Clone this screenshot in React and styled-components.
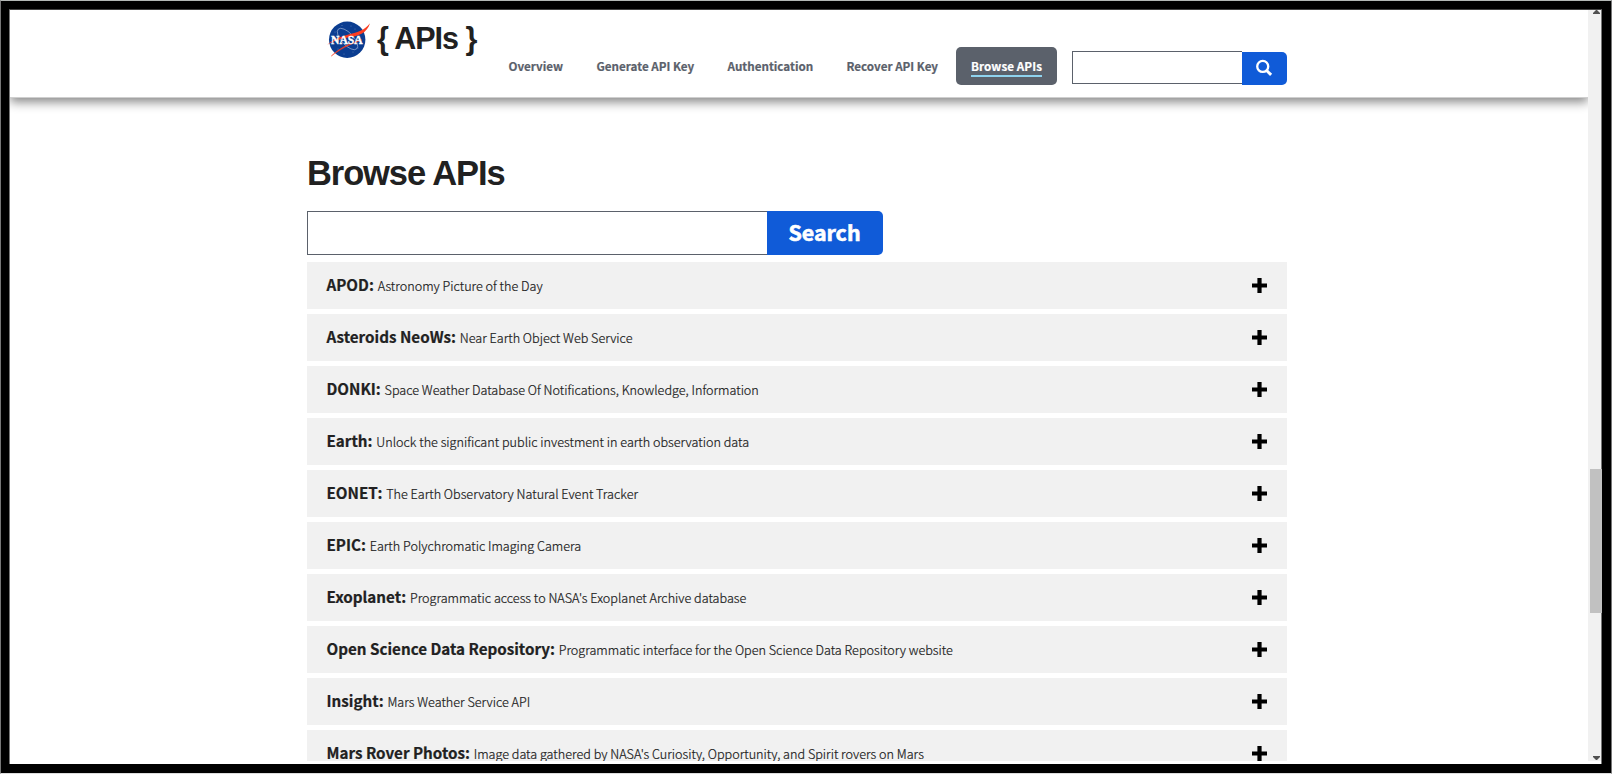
import React from "react";
import styled, { createGlobalStyle } from "styled-components";

const GlobalStyle = createGlobalStyle`
  *, *::before, *::after { box-sizing: border-box; }
  html, body { margin: 0; padding: 0; height: 100%; overflow: hidden; }
  body {
    background: #fff;
    color: #212121;
    font-family: "Noto Sans CJK SC", "Open Sans", sans-serif;
  }
`;

const Frame = styled.div`
  width: 1612px;
  height: 774px;
  border: 1px solid #777;
  border-top-color: #b4b8b6;
  border-bottom-color: #ddd;
`;

const Bezel = styled.div`
  height: 100%;
  border: 8px solid #000;
  border-right-width: 9px;
  border-bottom-width: 9px;
`;

const Viewport = styled.div`
  display: flex;
  height: 100%;
  padding-bottom: 3px;
  border: 1px solid #777;
  border-top-color: #444;
  border-bottom: 0;
  background: #fff;
`;

const Page = styled.div`
  flex: 1;
  min-width: 0;
  overflow: hidden;
`;

const Header = styled.header`
  position: relative;
  height: 88px;
  padding-left: 317px;
  display: flex;
  align-items: flex-start;
  background: #fff;
  border-bottom: 1px solid #cfcfcf;
  box-shadow: 0 4px 10px rgba(0, 0, 0, 0.48);
`;

const Brand = styled.a`
  display: flex;
  align-items: flex-start;
  width: 164px;
  padding-top: 10px;
`;

const BrandName = styled.span`
  margin: 1px 0 0 6px;
  font: bold 30.5px/34px "Liberation Sans", Arial, sans-serif;
  letter-spacing: -1px;
  white-space: nowrap;
`;

const Nav = styled.nav`
  display: flex;
  padding-top: 37px;
`;

const NavLink = styled.a`
  width: ${(p) => p.$width}px;
  height: 38px;
  padding: 9px 0 0 ${(p) => (p.$active ? 15 : 17.5)}px;
  border-radius: 5px;
  background: ${(p) => (p.$active ? "#5b616b" : "transparent")};
  color: ${(p) => (p.$active ? "#fff" : "#5b616b")};
  font-size: 11.65px;
  font-weight: 700;
  line-height: 20px;
  white-space: nowrap;
  -webkit-text-stroke: 0.2px currentColor;
`;

const NavLabel = styled.span`
  display: inline-block;
  height: 21px;
  border-bottom: ${(p) => (p.$active ? "2px solid #8fd3ee" : "0")};
  letter-spacing: ${(p) => (p.$active ? "0.08px" : "0")};
`;

const HeaderSearch = styled.form`
  display: flex;
  margin: 41px 0 0 15px;
`;

const HeaderInput = styled.input`
  width: 170px;
  height: 33px;
  border: 1px solid #5b616b;
  border-right: 0;
  border-radius: 0;
  outline: 0;
`;

const IconButton = styled.button`
  display: flex;
  align-items: center;
  justify-content: center;
  width: 45px;
  height: 33px;
  margin-top: 1px;
  padding: 0 1px 1px 0;
  border: 0;
  border-radius: 0 5px 5px 0;
  background: #105bd8;
`;

const Main = styled.main`
  width: 980px;
  margin: 0 0 0 297px;
`;

const Title = styled.h1`
  margin: 0;
  padding-top: 53px;
  font: bold 34.5px/44px "Liberation Sans", Arial, sans-serif;
  letter-spacing: -1.1px;
`;

const SearchForm = styled.form`
  display: flex;
  margin: 16px 0 7px;
`;

const SearchInput = styled.input`
  width: 460px;
  height: 44px;
  border: 1px solid #5b616b;
  border-right: 0;
  border-radius: 0;
  outline: 0;
`;

const SearchButton = styled.button`
  width: 116px;
  height: 44px;
  padding: 0 1px 3px 0;
  border: 0;
  border-radius: 0 5px 5px 0;
  background: #105bd8;
  color: #fff;
  font: 700 21.4px/40px "Noto Sans CJK SC", sans-serif;
  -webkit-text-stroke: 0.6px #fff;
`;

const List = styled.ul`
  display: flex;
  flex-direction: column;
  gap: 5px;
  margin: 0;
  padding: 0;
  list-style: none;
`;

const Row = styled.li`
  display: flex;
  align-items: center;
  justify-content: space-between;
  height: 47px;
  padding: 0 20px 0 19.5px;
  background: #f1f1f1;
`;

const RowText = styled.div`
  padding-bottom: 2px;
  line-height: 24px;
  font-size: 12.63px;
  font-weight: 300;
  white-space: nowrap;
  -webkit-text-stroke: 0.22px currentColor;
`;

const RowName = styled.strong`
  margin-right: 3.8px;
  font-size: 15.2px;
  font-weight: 700;
`;

const Scrollbar = styled.div`
  display: flex;
  flex-direction: column;
  align-items: flex-end;
  justify-content: space-between;
  width: 13px;
  background: #f1f1f1;
`;

const Arrow = styled.svg`
  display: block;
  margin-right: 1px;
`;

const Thumb = styled.div`
  width: 11px;
  height: 144px;
  margin-top: 312px;
`;

const ThumbFill = styled.div`
  width: 12px;
  height: 100%;
  background: #c1c1c1;
`;

const NasaLogo = () => (
  <svg width="44" height="40" viewBox="0 0 44 40" aria-label="NASA">
    <circle cx="20.2" cy="19.7" r="18.2" fill="#0b3d91" />
    <g fill="#fff" opacity="0.65">
      <circle cx="15" cy="5.5" r=".4" /><circle cx="24" cy="6" r=".4" />
      <circle cx="28" cy="9" r=".4" /><circle cx="8" cy="12" r=".4" />
      <circle cx="11" cy="29" r=".4" /><circle cx="26" cy="32" r=".4" />
      <circle cx="17" cy="34" r=".4" /><circle cx="31" cy="28" r=".4" />
    </g>
    <ellipse cx="20.5" cy="19" rx="6" ry="13.5" transform="rotate(-43 20.5 19)" fill="none" stroke="#c8d5ec" strokeWidth=".7" opacity=".75" />
    <path d="M43 3.2C37 10.5 31.5 12 19 15.2C11 17.5 5 20.5 .3 24.7C8 20.5 14 18.8 21 17.6C31 16 40 13.5 43 3.2Z" fill="#fc3d21" />
    <path d="M4.3 36C12 29 19 24.5 35 19.8C21 25 13 29.5 4.3 36Z" fill="#fc3d21" stroke="#fc3d21" strokeWidth=".5" />
    <text x="4.1" y="24" fill="#fff" stroke="#fff" strokeWidth=".35" fontFamily="Liberation Serif, serif" fontWeight="700" fontSize="11.5" textLength="31.5" lengthAdjust="spacingAndGlyphs">NASA</text>
  </svg>
);

const SearchIcon = () => (
  <svg width="18" height="18" viewBox="0 0 17 17" fill="none" stroke="#fff">
    <circle cx="7.3" cy="7" r="5.2" strokeWidth="2.2" />
    <path d="M11 10.8L15.2 15" strokeWidth="2.8" />
  </svg>
);

const PlusIcon = () => (
  <svg width="15" height="15" viewBox="0 0 15 15">
    <path d="M5.4 0h4.2v5.4H15v4H9.6V15H5.4V9.4H0v-4h5.4z" fill="#000" />
  </svg>
);

const NAV = [
  ["Overview", 88],
  ["Generate API Key", 131],
  ["Authentication", 119],
  ["Recover API Key", 127],
  ["Browse APIs", 101, true],
];

const APIS = [
  ["APOD", "Astronomy Picture of the Day"],
  ["Asteroids NeoWs", "Near Earth Object Web Service"],
  ["DONKI", "Space Weather Database Of Notifications, Knowledge, Information"],
  ["Earth", "Unlock the significant public investment in earth observation data"],
  ["EONET", "The Earth Observatory Natural Event Tracker"],
  ["EPIC", "Earth Polychromatic Imaging Camera"],
  ["Exoplanet", "Programmatic access to NASA's Exoplanet Archive database"],
  ["Open Science Data Repository", "Programmatic interface for the Open Science Data Repository website"],
  ["Insight", "Mars Weather Service API"],
  ["Mars Rover Photos", "Image data gathered by NASA's Curiosity, Opportunity, and Spirit rovers on Mars"],
];

export default function App() {
  return (
    <Frame>
      <GlobalStyle />
      <Bezel>
        <Viewport>
          <Page>
            <Header>
              <Brand>
                <NasaLogo />
                <BrandName>{"{ APIs }"}</BrandName>
              </Brand>
              <Nav>
                {NAV.map(([label, width, active]) => (
                  <NavLink key={label} $width={width} $active={active}>
                    <NavLabel $active={active}>{label}</NavLabel>
                  </NavLink>
                ))}
              </Nav>
              <HeaderSearch>
                <HeaderInput aria-label="Search site" />
                <IconButton type="button" aria-label="Search site"><SearchIcon /></IconButton>
              </HeaderSearch>
            </Header>
            <Main>
              <Title>Browse APIs</Title>
              <SearchForm>
                <SearchInput aria-label="Search APIs" />
                <SearchButton type="button">Search</SearchButton>
              </SearchForm>
              <List>
                {APIS.map(([name, description]) => (
                  <Row key={name}>
                    <RowText><RowName>{name}:</RowName>{description}</RowText>
                    <PlusIcon />
                  </Row>
                ))}
              </List>
            </Main>
          </Page>
          <Scrollbar>
            <Arrow width="7" height="4" viewBox="0 0 7 4"><path d="M0 4V3L3 0h1l3 3v1z" fill="#505050" /></Arrow>
            <Thumb><ThumbFill /></Thumb>
            <Arrow width="7" height="5" viewBox="0 0 7 5"><path d="M0 0h7v1L4 4H3L0 1z" fill="#505050" /></Arrow>
          </Scrollbar>
        </Viewport>
      </Bezel>
    </Frame>
  );
}
